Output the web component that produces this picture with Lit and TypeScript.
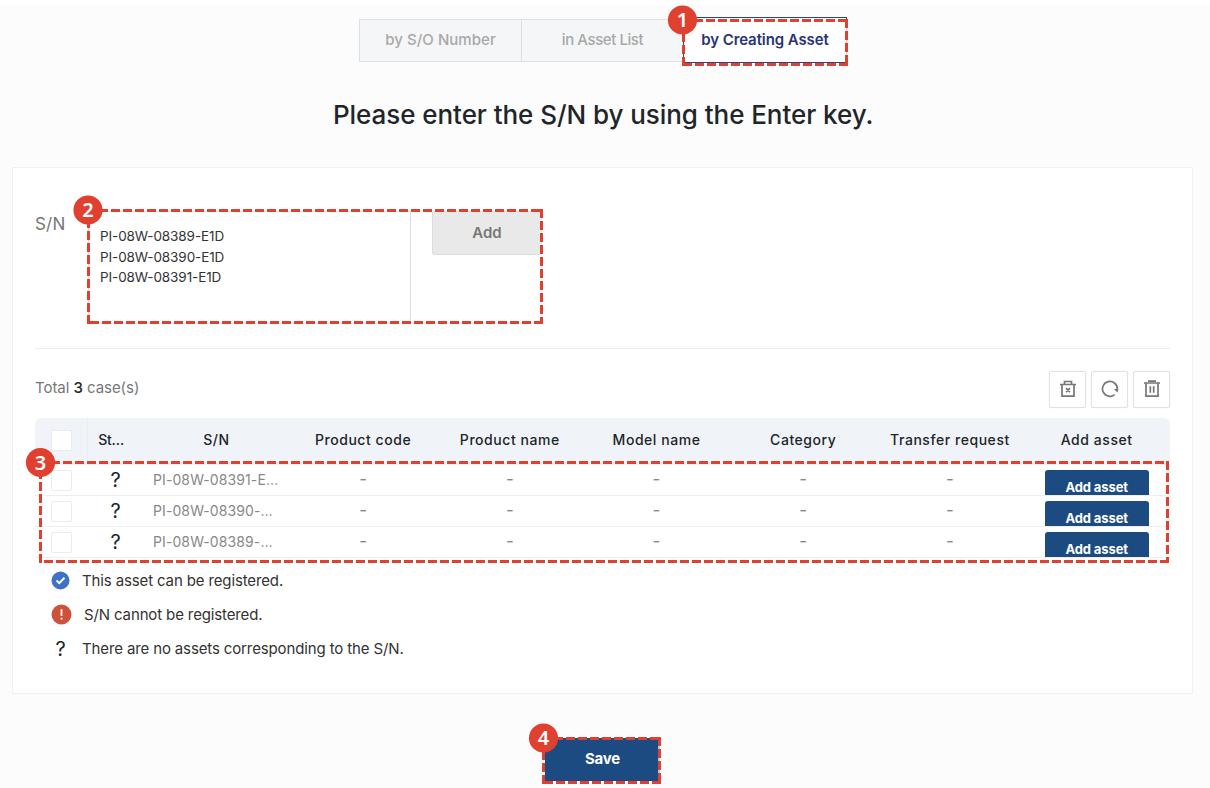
import { LitElement, html, css, svg } from "lit";
import { customElement, property } from "lit/decorators.js";

/** Numbered, dashed call-out frame laid over the page. */
@customElement("callout-layer")
class CalloutLayer extends LitElement {
  static styles = css`
    :host { position: absolute; inset: 0; pointer-events: none; }
    svg { display: block; }
    .edge { stroke: #e04030; stroke-width: 3; stroke-dasharray: 9 3; fill: none; }
    .halo { stroke: #fff; stroke-width: 3; fill: none; opacity: 0.7; }
    .disc { fill: #e04030; }
    .num { fill: #fff; font: 600 20px "Noto Sans", sans-serif; text-anchor: middle; }
  `;
  frames = [
    { n: 1, x: 682, y: 19, r: 848, b: 66, cx: 682.5, cy: 20 },
    { n: 2, x: 87, y: 209, r: 543, b: 324, cx: 88, cy: 210 },
    { n: 3, x: 39, y: 461, r: 1169, b: 563, cx: 40.5, cy: 462.5 },
    { n: 4, x: 542, y: 737, r: 661, b: 784, cx: 543.5, cy: 738 },
  ];
  render() {
    return html`<svg width="1210" height="788" viewBox="0 0 1210 788">
      ${this.frames.map((f) => {
        const l = f.x + 1.5, t = f.y + 1.5, r = f.r - 1.5, b = f.b - 1.5;
        return svg`
          <path class="halo" d="M${r} ${f.y}V${f.b}M${f.x} ${b}H${f.r}"/>
          <path class="edge" d="M${f.x} ${t}H${f.r}M${r} ${f.y}V${f.b}M${f.r} ${b}H${f.x}M${l} ${f.b}V${f.y}"/>
          <circle class="disc" cx=${f.cx} cy=${f.cy} r="14.6"/>
          <text class="num" x=${f.cx} y=${f.cy + 7.2}>${f.n}</text>`;
      })}
    </svg>`;
  }
}

@customElement("tool-icon")
class ToolIcon extends LitElement {
  @property() name = "trash";
  static styles = css`
    :host { display: block; width: 18px; height: 18px; }
    svg { display: block; fill: none; stroke: #777; stroke-width: 1.7; }
    .solid { fill: #777; stroke: none; }
  `;
  render() {
    const shapes: Record<string, unknown> = {
      clear: svg`<path d="M1 4.5H17M3 4.5V16.2H15V4.5M5.5 4V1.5H12.5V4M7 8.2L11 12.2M11 8.2L7 12.2"/>`,
      refresh: svg`<path d="M13.6 14.6A7.4 7.4 0 1 1 16.3 8.8"/><path class="solid" d="M12.9 9.2L17.5 8.2L16.6 12.6Z"/>`,
      trash: svg`<path d="M1 3H17M3 3V16.2H15V3M5 1.2H13M7.3 6.2V12.7M10.7 6.2V12.7"/>`,
    };
    return html`<svg width="18" height="18" viewBox="0 0 18 18">${shapes[this.name]}</svg>`;
  }
}

@customElement("app-root")
class AppRoot extends LitElement {
  static styles = css`
    :host { display: block; position: relative; width: 1210px; height: 788px; overflow: hidden; background: #fff;
      font-family: Inter, "Noto Sans", sans-serif; color: #212529; }
    * { box-sizing: border-box; }
    .page { display: flex; flex-direction: column; margin-top: 5px; height: 783px; background: #fcfcfc; }
    .tabs { display: flex; width: 488px; height: 46px; margin: 12px 0 0 359px; align-items: flex-start; }
    .tab { width: 163px; height: 43px; margin: 2px -1px 0 0; border: 1px solid #dcdfe6; background: #f4f6f8; color: #a8a8a8;
      font-size: 15px; font-weight: 500; letter-spacing: 0.05px; display: grid; place-items: center; line-height: 20px; padding-bottom: 1px; }
    .tab.narrow { letter-spacing: -0.42px; }
    .tab.active { width: 164px; height: 46px; margin: 0; border-color: #2f4678; background: #fff; color: #2a3472; font-weight: 600; letter-spacing: -0.1px; }
    h1 { margin: 32px 0 0 333px; width: 560px; font-size: 26px; line-height: 40px; font-weight: 500; letter-spacing: -0.06px; white-space: nowrap; }
    .card { margin: 32px 0 0 12px; width: 1181px; height: 527px; padding: 0 22px; background: #fff; border: 1px solid #f0f0f0; }
    .entry { display: flex; height: 181px; padding-top: 43px; border-bottom: 1px solid #ececec; }
    .label { width: 53px; padding-top: 2px; font-size: 17px; line-height: 22px; color: #777; letter-spacing: 0.2px; }
    .area { width: 323px; height: 113px; border: 1px solid #d9dce3; padding: 14px 11px; font-size: 13.5px; line-height: 20.5px; color: #333; letter-spacing: -0.1px; }
    .add { width: 110px; height: 44px; margin-left: 21px; border: 1px solid #d9dce3; border-radius: 2px; background: #e9e9e9; color: #777;
      font-size: 15px; font-weight: 600; line-height: 42px; text-align: center; }
    .bar { display: flex; justify-content: space-between; height: 69px; padding-top: 22px; }
    .total { font-size: 15px; line-height: 34px; color: #777; letter-spacing: -0.05px; }
    .total b { font-weight: 500; color: #212529; }
    .tools { display: flex; gap: 5px; }
    .tool { width: 37px; height: 37px; border: 1px solid #e0e2e3; border-radius: 2px; display: grid; place-items: center; box-shadow: 0 0 1px #ddd; }
    tool-icon { margin-bottom: 1px; }
    .row { display: grid; grid-template-columns: 53px 55px repeat(7, 146.72px); height: 31.3px; border-bottom: 1px solid #eee; overflow: hidden; text-align: center;
      font-size: 14px; color: #888; line-height: 30px; }
    .row.head { height: 46.5px; line-height: 43px; background: #f0f4f8; border: 0; border-radius: 6px 6px 0 0; color: #212529; font-weight: 500; font-size: 14px; letter-spacing: 0.55px; }
    .row.head .state { letter-spacing: -0.3px; padding-right: 9px; }
    .box { width: 21px; height: 21px; margin: 5px 0 0 16px; border: 1px solid #e9ecf2; border-radius: 2px; background: #fff; }
    .head .box { margin-top: 12px; }
    .head .first { border-right: 1px solid #eaedf2; }
    .q { font-size: 20px; color: #212529; font-weight: 400; }
    .dash { font-size: 17px; line-height: 29px; }
    .sn { text-align: left; padding-left: 10px; letter-spacing: 0.1px; }
    .mini { width: 104px; height: 31px; margin: 5px auto 0; border-radius: 3px 3px 0 0; background: #1c4b82; color: #fff; font-size: 13px; font-weight: 700; letter-spacing: -0.1px; line-height: 34px; }
    .legend { display: flex; flex-direction: column; margin: 5px 0 0 16px; font-size: 15px; color: #333; letter-spacing: -0.13px; }
    .item { display: flex; align-items: center; height: 34.2px; gap: 12px; }
    .item svg { display: block; }
    .item .q { width: 19px; text-align: center; }
    .save { width: 115px; height: 43px; margin: 44px 0 0 545px; background: #1c4b82; color: #fff; font-weight: 700; font-size: 15px; letter-spacing: -0.2px; text-align: center; line-height: 41px; }
  `;
  heads = ["S/N", "Product code", "Product name", "Model name", "Category", "Transfer request", "Add asset"];
  serials = ["PI-08W-08391-E…", "PI-08W-08390-…", "PI-08W-08389-…"];
  render() {
    return html`
      <div class="page">
        <div class="tabs">
          <div class="tab">by S/O Number</div>
          <div class="tab narrow">in Asset List</div>
          <div class="tab active">by Creating Asset</div>
        </div>
        <h1>Please enter the S/N by using the Enter key.</h1>
        <div class="card">
          <div class="entry">
            <div class="label">S/N</div>
            <div class="area">PI-08W-08389-E1D<br />PI-08W-08390-E1D<br />PI-08W-08391-E1D</div>
            <div class="add">Add</div>
          </div>
          <div class="bar">
            <div class="total">Total <b>3</b> case(s)</div>
            <div class="tools">
              ${["clear", "refresh", "trash"].map((n) => html`<div class="tool"><tool-icon name=${n}></tool-icon></div>`)}
            </div>
          </div>
          <div class="row head">
            <div class="first"><div class="box"></div></div>
            <div class="state">St…</div>
            ${this.heads.map((h) => html`<div>${h}</div>`)}
          </div>
          ${this.serials.map((s) => html`<div class="row">
            <div><div class="box"></div></div>
            <div class="q">?</div>
            <div class="sn">${s}</div>
            ${[1, 2, 3, 4, 5].map(() => html`<div class="dash">-</div>`)}
            <div><div class="mini">Add asset</div></div>
          </div>`)}
          <div class="legend">
            <div class="item">
              <svg width="19" height="19" viewBox="0 0 19 19"><circle cx="9.5" cy="9.5" r="9" fill="#3f72c4"/><path d="M5.5 9.5L8.3 12.2L13.5 6.8" fill="none" stroke="#fff" stroke-width="2"/></svg>
              <span>This asset can be registered.</span>
            </div>
            <div class="item">
              <svg width="21" height="21" viewBox="0 0 21 21"><circle cx="10.5" cy="10.5" r="10" fill="#cc5239"/><path d="M10.5 5.2V12M10.5 13.8V15.6" stroke="#fff" stroke-width="1.8"/></svg>
              <span>S/N cannot be registered.</span>
            </div>
            <div class="item"><span class="q">?</span><span>There are no assets corresponding to the S/N.</span></div>
          </div>
        </div>
        <div class="save">Save</div>
      </div>
      <callout-layer></callout-layer>
    `;
  }
}
